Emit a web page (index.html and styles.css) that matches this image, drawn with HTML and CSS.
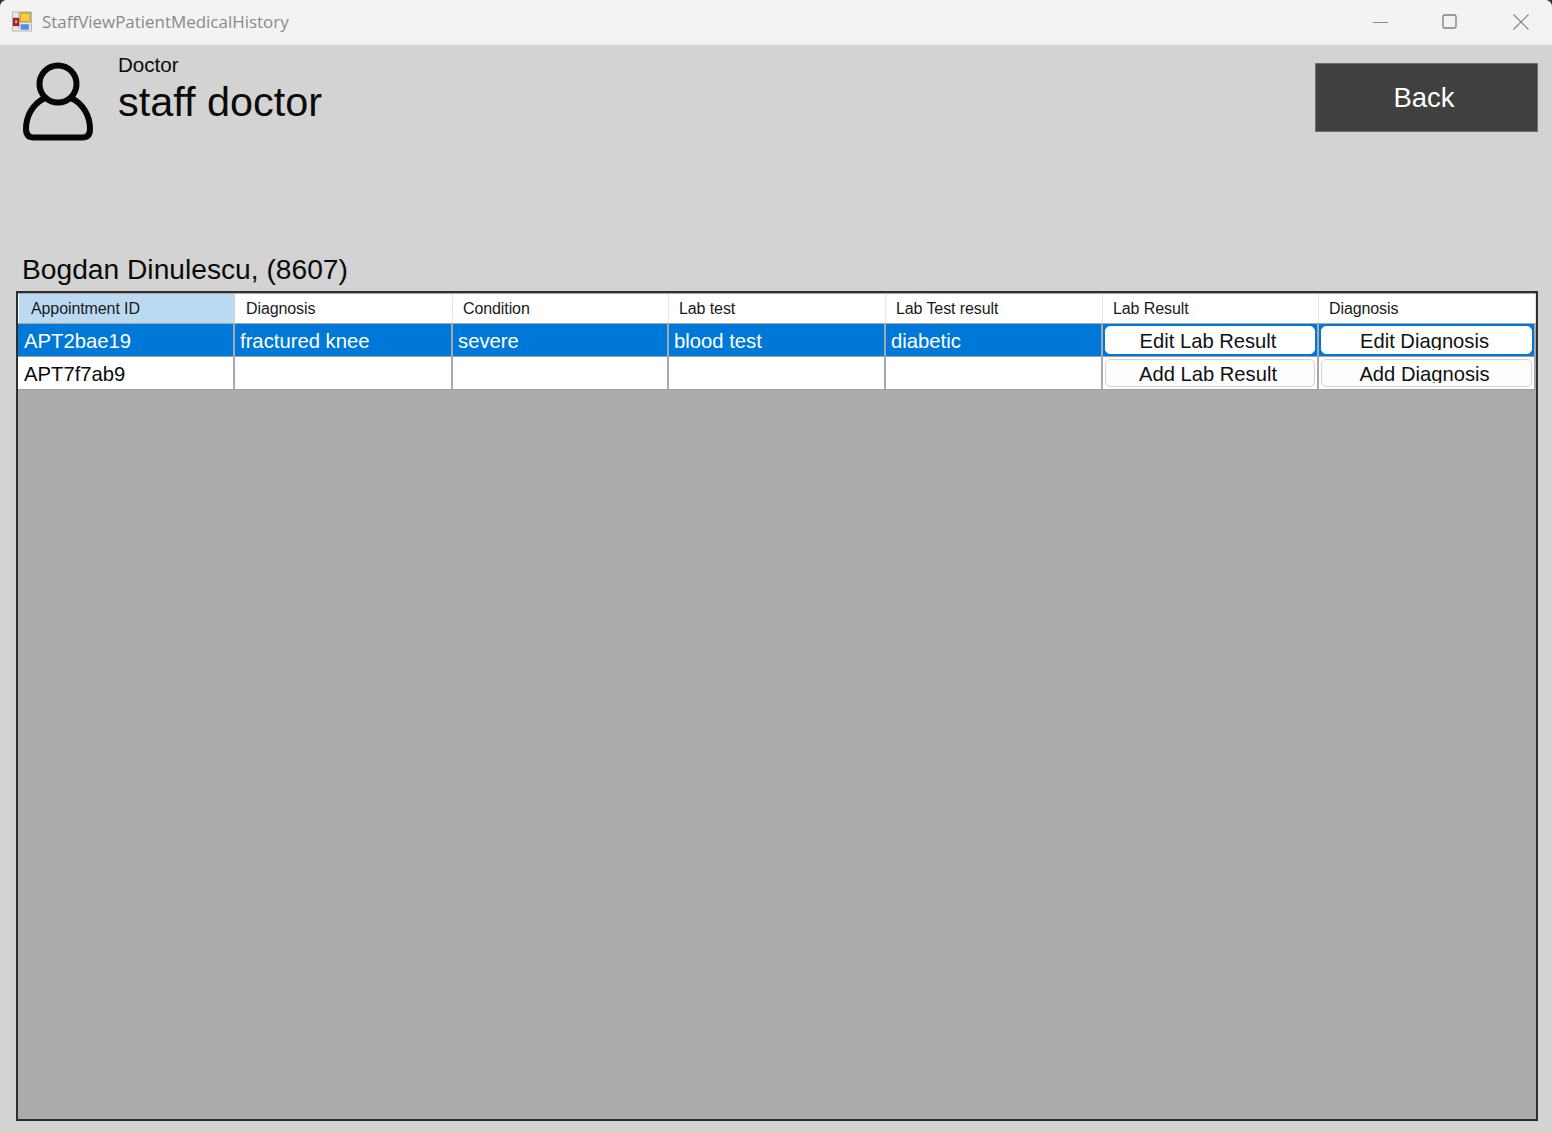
FILE: index.html
```html
<!DOCTYPE html>
<html lang="en">
<head>
<meta charset="utf-8">
<title>StaffViewPatientMedicalHistory</title>
<link rel="stylesheet" href="styles.css">
</head>
<body>
<div class="window">
  <header class="titlebar">
    <svg class="app-icon" width="20" height="21" viewBox="0 0 22 22">
      <rect x="0.5" y="0.5" width="21" height="21" fill="#e8e8e8" stroke="#b5b5b5"/>
      <path d="M1 7.5H9M1 15.5H21M7 1V21M15 15V21" stroke="#c4c4c4" fill="none"/>
      <rect x="1.5" y="7.5" width="6" height="8" fill="#c0241f" stroke="#8a1a16"/>
      <rect x="3.5" y="10" width="2" height="2.5" fill="#f3c9b8"/>
      <rect x="9" y="1.5" width="11" height="10" fill="#f6cc45" stroke="#a98320"/>
      <rect x="9.5" y="14" width="9" height="6" fill="#4f8fe6"/>
    </svg>
    <span class="window-title">StaffViewPatientMedicalHistory</span>
    <div class="controls">
      <svg class="ctl ctl-min" width="16" height="16" viewBox="0 0 16 16"><path d="M0 8.5H15" stroke="#8d8d8d" fill="none"/></svg>
      <svg class="ctl ctl-max" width="16" height="16" viewBox="0 0 16 16"><rect x="1" y="1" width="13" height="13" rx="1.5" stroke="#7d7d7d" stroke-width="1.3" fill="none"/></svg>
      <svg class="ctl ctl-close" width="16" height="16" viewBox="0 0 16 16"><path d="M0.5 0.5L15.5 15.5M15.5 0.5L0.5 15.5" stroke="#808080" stroke-width="1.1" fill="none"/></svg>
    </div>
  </header>
  <main class="content">
    <section class="top">
      <svg class="avatar" width="72" height="80" viewBox="0 0 72 80">
        <circle cx="36" cy="22" r="18.5" fill="none" stroke="#060606" stroke-width="6"/>
        <path d="M23 36C10 42 4 55 4 67Q4 75.500 12 75.500H60Q68 75.500 68 67C68 55 62 42 49 36" fill="none" stroke="#060606" stroke-width="6" stroke-linecap="round"/>
      </svg>
      <div class="who">
        <div class="role">Doctor</div>
        <div class="name">staff doctor</div>
      </div>
      <button class="back">Back</button>
    </section>
    <h1 class="patient">Bogdan Dinulescu, (8607)</h1>
    <section class="grid">
      <div class="row head">
        <div class="hcell current">Appointment ID</div>
        <div class="hcell">Diagnosis</div>
        <div class="hcell">Condition</div>
        <div class="hcell">Lab test</div>
        <div class="hcell">Lab Test result</div>
        <div class="hcell">Lab Result</div>
        <div class="hcell">Diagnosis</div>
      </div>
      <div class="row body-row selected">
        <div class="cell">APT2bae19</div>
        <div class="cell">fractured knee</div>
        <div class="cell">severe</div>
        <div class="cell">blood test</div>
        <div class="cell">diabetic</div>
        <div class="cell btn-cell"><button class="cell-btn"><span class="btn-label">Edit Lab Result</span></button></div>
        <div class="cell btn-cell"><button class="cell-btn"><span class="btn-label">Edit Diagnosis</span></button></div>
      </div>
      <div class="row body-row">
        <div class="cell">APT7f7ab9</div>
        <div class="cell"></div>
        <div class="cell"></div>
        <div class="cell"></div>
        <div class="cell"></div>
        <div class="cell btn-cell"><button class="cell-btn"><span class="btn-label">Add Lab Result</span></button></div>
        <div class="cell btn-cell"><button class="cell-btn"><span class="btn-label">Add Diagnosis</span></button></div>
      </div>
    </section>
  </main>
</div>
</body>
</html>
```
FILE: styles.css
```css
* { box-sizing: border-box; }
html, body { margin: 0; height: 100%; }
body {
  background: #2a2f3a;
  font-family: "Liberation Sans", Arial, sans-serif;
  color: #0a0a0a;
  overflow: hidden;
}
.window {
  height: 1132px;
  display: flex;
  flex-direction: column;
  background: #d3d3d3;
  border-radius: 7px 7px 0 0;
  overflow: hidden;
}
.titlebar {
  height: 45px;
  flex: none;
  display: flex;
  align-items: center;
  padding-left: 12px;
  background: #f3f3f3;
  box-shadow: inset 0 -1px 0 #ececec;
}
.app-icon { flex: none; margin: -3px 0 0 0; }
.window-title {
  margin: -3px 0 0 10px;
  font-family: "Open Sans", sans-serif;
  font-size: 16.950px;
  color: #8a8a8a;
  white-space: nowrap;
}
.controls {
  margin-left: auto;
  margin-top: -2px;
  display: flex;
  align-items: center;
  padding-right: 23px;
}
.ctl { display: block; }
.ctl-min { margin-right: 53px; }
.ctl-max { margin-right: 55px; }

.content {
  flex: 1;
  padding: 0 14px 11px 16px;
  display: flex;
  flex-direction: column;
}
.top {
  height: 199px;
  flex: none;
  display: flex;
  align-items: flex-start;
  padding-left: 6px;
}
.avatar { flex: none; margin-top: 17px; }
.who { margin-left: 24px; padding-top: 8px; }
.role { font-size: 20.600px; line-height: 23px; }
.name { font-size: 41.400px; line-height: 46px; margin-top: 3px; }
.back {
  margin-left: auto;
  margin-top: 18px;
  width: 223px;
  height: 69px;
  background: #404040;
  border: 1px solid #6f6f6f;
  color: #fff;
  font: 27.500px "Liberation Sans", Arial, sans-serif;
  padding: 0 5px 0 0;
}
.patient {
  margin: 0 0 4px 6px;
  font-weight: 400;
  font-size: 28.200px;
  line-height: 43px;
  height: 43px;
  padding-top: 4px;
}
.grid {
  flex: 1;
  min-height: 0;
  background: #ababab;
  border: 2px solid #2e2e2e;
  padding-top: 1px;
}
.row {
  display: grid;
  grid-template-columns: 217px 218px 216px 217px 217px 216px 217px;
}
.head {
  height: 30px;
  background: #fff;
  border-bottom: 1px solid #a9a9a9;
}
.hcell {
  font-size: 16px;
  line-height: 30px;
  padding-left: 10px;
  letter-spacing: -0.1px;
  color: #1a1a1a;
  border-right: 1px solid #e6e6e6;
  white-space: nowrap;
  overflow: hidden;
}
.hcell:nth-child(2) { padding-left: 11px; }
.hcell.current {
  background: #bbdaf2;
  margin-left: 1px;
  padding-left: 12px;
  border-right: 0;
}
.body-row {
  height: 33px;
  background: #fff;
  border-bottom: 1px solid #a0a0a0;
}
.cell {
  font-size: 20.250px;
  line-height: 34px;
  padding-left: 5px;
  border-right: 2px solid #a8a8a8;
  white-space: nowrap;
  overflow: hidden;
}
.cell:first-child { padding-left: 6px; }
.selected { background: #0078d7; color: #fff; }
.btn-cell { padding: 2px; display: flex; }
.cell-btn {
  flex: 1;
  height: 28px;
  background: #fdfdfd;
  color: #111;
  border: 1px solid #d4d4d4;
  border-radius: 5px;
  font: 20.200px/24px "Liberation Sans", Arial, sans-serif;
  padding: 0 4px 0 0;
  overflow: hidden;
}
.btn-label {
  display: block;
  height: 21px;
  margin-bottom: 2px;
  overflow: hidden;
}
.selected .cell-btn { border-color: #fff; background: #fff; }
```
